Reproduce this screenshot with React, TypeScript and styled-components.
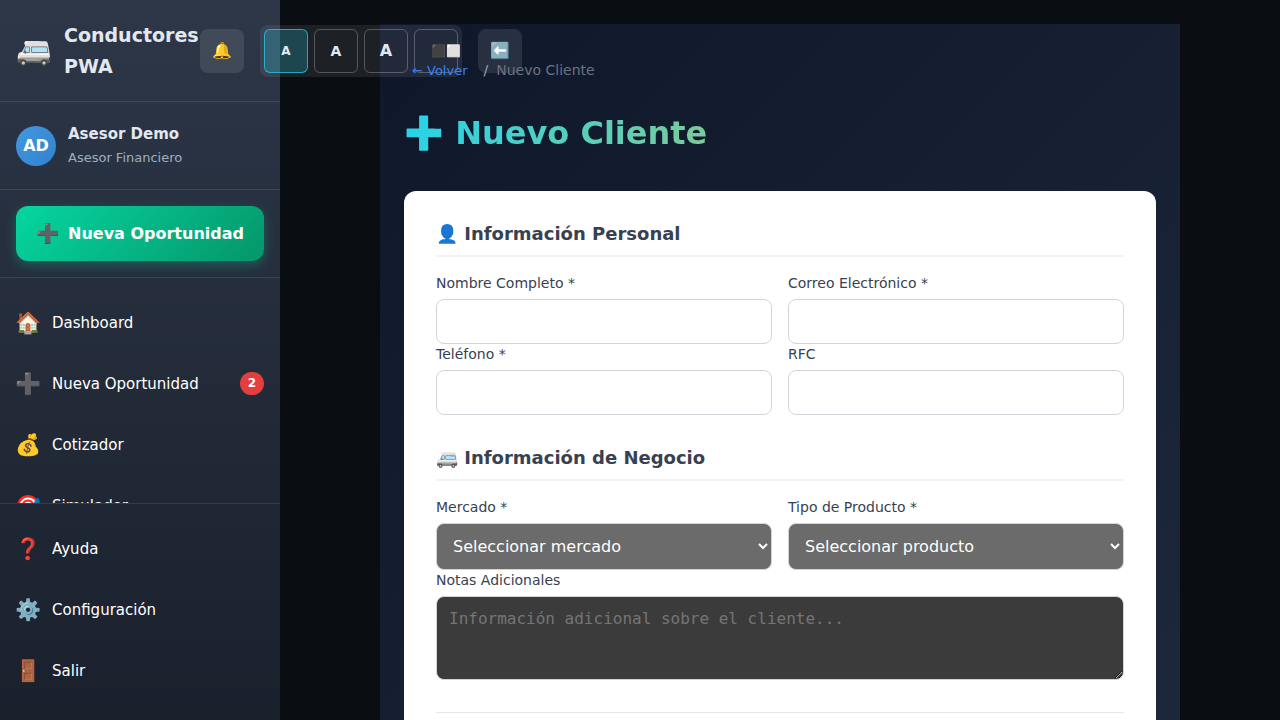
import React from 'react';
import styled, { createGlobalStyle, css } from 'styled-components';

const GlobalStyle = createGlobalStyle`
  *, *::before, *::after { box-sizing: border-box; }
  body {
    margin: 0;
    background: #0a0e12;
    color: #ffffff;
    font-family: "DejaVu Sans", sans-serif;
    font-size: 16px;
  }
  button, input, select { font-family: inherit; }
  h1, h2, p { margin: 0; }
`;

const Shell = styled.div`
  display: flex;
  align-items: flex-start;
  min-height: 100vh;
`;

const Sidebar = styled.aside`
  position: sticky;
  top: 0;
  z-index: 2;
  display: flex;
  flex-direction: column;
  flex: 0 0 280px;
  width: 280px;
  height: 100vh;
  background: linear-gradient(180deg, #2d3748 0%, #1a202c 100%);
`;

const divider = css`
  border-bottom: 1px solid rgba(255, 255, 255, 0.1);
`;

const SidebarHeader = styled.header`
  display: flex;
  align-items: center;
  flex-shrink: 0;
  min-height: 102px;
  padding: 0 16px;
  ${divider}
`;

const Brand = styled.div`
  display: flex;
  align-items: center;
  gap: 12px;
  flex: 0 0 184px;
  width: 184px;
  color: #e2e8f0;
  font-size: 19px;
  font-weight: 700;
  line-height: 31px;
`;

const BrandIcon = styled.span`
  flex: 0 0 36px;
  font-size: 29px;
  font-weight: 400;
`;

const Toolbar = styled.div`
  display: flex;
  align-items: center;
  gap: 16px;
  flex-shrink: 0;
`;

const ToolButton = styled.button`
  width: 44px;
  height: 44px;
  padding: 0;
  border: 0;
  border-radius: 8px;
  background: rgba(255, 255, 255, 0.1);
  color: #e2e8f0;
  font-size: 16px;
`;

const SizeGroup = styled.div`
  display: flex;
  gap: 6px;
  padding: 4px;
  border-radius: 8px;
  background: rgba(255, 255, 255, 0.08);
`;

const SizeButton = styled.button<{ $size: number; $active?: boolean; $wide?: boolean }>`
  width: 44px;
  height: 44px;
  padding: 0 ${p => (p.$wide ? 16 : 0)}px;
  border: 1px solid ${p => (p.$active ? 'rgba(34, 211, 238, 0.7)' : 'rgba(255, 255, 255, 0.25)')};
  border-radius: 6px;
  background: ${p => (p.$active ? 'rgba(34, 211, 238, 0.22)' : 'transparent')};
  color: #e2e8f0;
  font-size: ${p => p.$size}px;
  font-weight: 700;
  text-align: ${p => (p.$wide ? 'left' : 'center')};
  white-space: nowrap;
`;

const Profile = styled.section`
  display: flex;
  align-items: center;
  gap: 12px;
  flex-shrink: 0;
  min-height: 88px;
  padding: 0 16px;
  ${divider}
`;

const Avatar = styled.div`
  display: grid;
  place-items: center;
  width: 40px;
  height: 40px;
  border-radius: 50%;
  background: linear-gradient(135deg, #4299e1, #3182ce);
  font-size: 16px;
  font-weight: 700;
`;

const ProfileText = styled.div`
  display: flex;
  flex-direction: column;
`;

const ProfileName = styled.p`
  color: #e2e8f0;
  font-size: 15px;
  font-weight: 700;
  line-height: 24px;
`;

const ProfileRole = styled.p`
  color: #a0aec0;
  font-size: 13px;
  line-height: 24px;
`;

const CtaSection = styled.div`
  flex-shrink: 0;
  padding: 16px;
  ${divider}
`;

const CtaButton = styled.button`
  display: flex;
  align-items: center;
  justify-content: center;
  gap: 8px;
  width: 100%;
  height: 55px;
  border: 0;
  border-radius: 12px;
  background: linear-gradient(135deg, #06d6a0, #059669);
  box-shadow: 0 4px 12px rgba(6, 214, 160, 0.3);
  color: #ffffff;
  font-size: 16px;
  font-weight: 700;
`;

const CtaIcon = styled.span`
  font-size: 19px;
`;

const Nav = styled.nav`
  flex: 1 1 0;
  min-height: 0;
  overflow: hidden;
  padding: 16px 0;
`;

const FooterNav = styled.nav`
  flex-shrink: 0;
  min-height: 217px;
  padding: 16px 0;
  border-top: 1px solid rgba(255, 255, 255, 0.1);
`;

const NavLink = styled.a`
  display: flex;
  align-items: center;
  gap: 12px;
  height: 57px;
  margin-bottom: 4px;
  padding: 0 16px;
  color: #ffffff;
  font-size: 15px;
  text-decoration: none;
`;

const NavIcon = styled.span`
  display: flex;
  justify-content: center;
  width: 24px;
  font-size: 21px;
  line-height: 24px;
`;

const NavBadge = styled.span`
  min-width: 24px;
  margin-left: auto;
  border-radius: 12px;
  background: #e53e3e;
  font-size: 12px;
  font-weight: 700;
  line-height: 23px;
  text-align: center;
`;

const Content = styled.main`
  flex: 1 1 0;
  min-width: 0;
  padding: 24px;
`;

const Page = styled.div`
  max-width: 800px;
  margin: 0 auto;
  padding: 24px;
  background: linear-gradient(135deg, #0f172a 0%, #1e293b 100%);
`;

/* Stays above the toolbar that reaches out of the sidebar. */
const Breadcrumb = styled.nav`
  position: relative;
  z-index: 3;
  display: flex;
  align-items: center;
  gap: 8px;
  height: 44px;
  margin-bottom: 16px;
  color: #6b7280;
  font-size: 14px;
  line-height: 22px;
`;

const BackButton = styled.button`
  height: 44px;
  padding: 0 8px;
  border: 0;
  background: none;
  color: #3b82f6;
  font-size: 13px;
`;

const Slash = styled.span`
  color: #9ca3af;
`;

const Title = styled.h1`
  margin-bottom: 32px;
  background: linear-gradient(135deg, #22d3ee, #fbbf24);
  background-clip: text;
  -webkit-background-clip: text;
  -webkit-text-fill-color: transparent;
  font-size: 32px;
  font-weight: 700;
  line-height: 51px;
`;

const Card = styled.form`
  display: flex;
  flex-direction: column;
  gap: 32px;
  padding: 32px;
  border-radius: 12px;
  background: #ffffff;
`;

const SectionTitle = styled.h2`
  margin-bottom: 16px;
  padding-bottom: 10px;
  border-bottom: 2px solid #f3f4f6;
  color: #374151;
  font-size: 18px;
  font-weight: 700;
  line-height: 22px;
`;

const FieldGrid = styled.div`
  display: grid;
  grid-template-columns: 1fr 1fr;
  column-gap: 16px;
`;

const FieldBox = styled.div<{ $full?: boolean }>`
  display: flex;
  flex-direction: column;
  gap: 6px;
  grid-column: ${p => (p.$full ? '1 / -1' : 'auto')};
`;

const Label = styled.label`
  color: #374151;
  font-size: 14px;
  line-height: 20px;
`;

const control = css`
  width: 100%;
  border: 1px solid #d1d5db;
  border-radius: 8px;
  font-size: 16px;
`;

const TextInput = styled.input`
  ${control}
  height: 45px;
  padding: 0 12px;
  background: #ffffff;
  color: #374151;
`;

const Select = styled.select`
  ${control}
  height: 47px;
  padding: 0 0 0 12px;
  background-color: #6b6b6b;
  color: #ffffff;
  color-scheme: dark;
`;

const TextArea = styled.textarea`
  ${control}
  height: 84px;
  padding: 12px;
  background: #3b3b3b;
  color: #ffffff;
  color-scheme: dark;
  font-family: "DejaVu Sans Mono", monospace;
  resize: vertical;
  &::placeholder { color: #757575; }
`;

const FormFooter = styled.footer`
  min-height: 80px;
  border-top: 1px solid #e5e7eb;
`;

const mainLinks = [
  { icon: '🏠', label: 'Dashboard' },
  { icon: '➕', label: 'Nueva Oportunidad', badge: 2 },
  { icon: '💰', label: 'Cotizador' },
  { icon: '🎯', label: 'Simulador' },
];

const footerLinks = [
  { icon: '❓', label: 'Ayuda' },
  { icon: '⚙️', label: 'Configuración' },
  { icon: '🚪', label: 'Salir' },
];

function NavItem({ icon, label, badge }: { icon: string; label: string; badge?: number }) {
  return (
    <NavLink href="#">
      <NavIcon>{icon}</NavIcon>
      <span>{label}</span>
      {badge !== undefined && <NavBadge>{badge}</NavBadge>}
    </NavLink>
  );
}

function Field({ id, label, type = 'text' }: { id: string; label: string; type?: string }) {
  return (
    <FieldBox>
      <Label htmlFor={id}>{label}</Label>
      <TextInput id={id} type={type} />
    </FieldBox>
  );
}

function SelectField({ id, label, placeholder }: { id: string; label: string; placeholder: string }) {
  return (
    <FieldBox>
      <Label htmlFor={id}>{label}</Label>
      <Select id={id} defaultValue="">
        <option value="">{placeholder}</option>
      </Select>
    </FieldBox>
  );
}

export default function App() {
  return (
    <>
      <GlobalStyle />
      <Shell>
        <Sidebar>
          <SidebarHeader>
            <Brand>
              <BrandIcon>🚐</BrandIcon>
              <span>Conductores PWA</span>
            </Brand>
            <Toolbar>
              <ToolButton type="button">🔔</ToolButton>
              <SizeGroup>
                <SizeButton type="button" $size={12} $active>A</SizeButton>
                <SizeButton type="button" $size={14}>A</SizeButton>
                <SizeButton type="button" $size={16}>A</SizeButton>
                <SizeButton type="button" $size={12} $wide>⬛⬜</SizeButton>
              </SizeGroup>
              <ToolButton type="button">⬅️</ToolButton>
            </Toolbar>
          </SidebarHeader>
          <Profile>
            <Avatar>AD</Avatar>
            <ProfileText>
              <ProfileName>Asesor Demo</ProfileName>
              <ProfileRole>Asesor Financiero</ProfileRole>
            </ProfileText>
          </Profile>
          <CtaSection>
            <CtaButton type="button">
              <CtaIcon>➕</CtaIcon>
              <span>Nueva Oportunidad</span>
            </CtaButton>
          </CtaSection>
          <Nav>
            {mainLinks.map(link => <NavItem key={link.label} {...link} />)}
          </Nav>
          <FooterNav>
            {footerLinks.map(link => <NavItem key={link.label} {...link} />)}
          </FooterNav>
        </Sidebar>
        <Content>
          <Page>
            <Breadcrumb>
              <BackButton type="button">← Volver</BackButton>
              <Slash>/</Slash>
              <span>Nuevo Cliente</span>
            </Breadcrumb>
            <Title>➕ Nuevo Cliente</Title>
            <Card>
              <section>
                <SectionTitle>👤 Información Personal</SectionTitle>
                <FieldGrid>
                  <Field id="nombre" label="Nombre Completo *" />
                  <Field id="correo" label="Correo Electrónico *" type="email" />
                  <Field id="telefono" label="Teléfono *" type="tel" />
                  <Field id="rfc" label="RFC" />
                </FieldGrid>
              </section>
              <section>
                <SectionTitle>🚐 Información de Negocio</SectionTitle>
                <FieldGrid>
                  <SelectField id="mercado" label="Mercado *" placeholder="Seleccionar mercado" />
                  <SelectField id="producto" label="Tipo de Producto *" placeholder="Seleccionar producto" />
                  <FieldBox $full>
                    <Label htmlFor="notas">Notas Adicionales</Label>
                    <TextArea id="notas" placeholder="Información adicional sobre el cliente..." />
                  </FieldBox>
                </FieldGrid>
              </section>
              <FormFooter />
            </Card>
          </Page>
        </Content>
      </Shell>
    </>
  );
}
